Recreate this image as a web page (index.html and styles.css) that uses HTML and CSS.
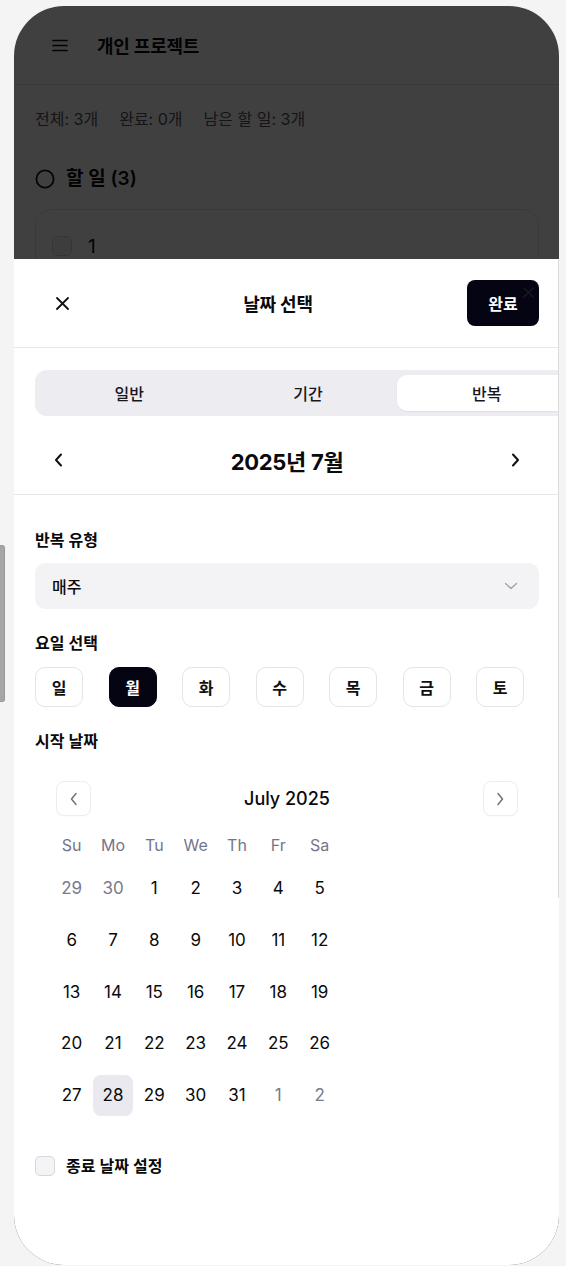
FILE: index.html
```html
<!DOCTYPE html>
<html lang="ko">
<head>
<meta charset="utf-8">
<title>날짜 선택</title>
<link rel="stylesheet" href="styles.css">
</head>
<body>
<div class="side-handle"></div>
<div class="device">
  <div class="app">
    <header class="app-header">
      <svg class="menu-icon" width="16" height="13" viewBox="0 0 16 13"><path d="M1 1.5h14M1 6.5h14M1 11.5h14" stroke="#111" stroke-width="1.7" stroke-linecap="round"/></svg>
      <h1 class="app-title">개인 프로젝트</h1>
    </header>
    <div class="stats"><span>전체: 3개</span><span>완료: 0개</span><span>남은 할 일: 3개</span></div>
    <h2 class="section-title"><svg width="20" height="20" viewBox="0 0 20 20"><circle cx="10" cy="10" r="8.6" fill="none" stroke="#111" stroke-width="1.8"/></svg>할 일 (3)</h2>
    <div class="todo-card"><span class="todo-check"></span><span class="todo-text">1</span></div>
  </div>
  <div class="overlay"></div>
  <div class="sheet">
    <div class="sheet-header">
      <button class="close-btn" aria-label="닫기"><svg width="13" height="13" viewBox="0 0 13 13"><path d="M1 1l11 11M12 1L1 12" stroke="#111" stroke-width="1.8" stroke-linecap="round"/></svg></button>
      <h2 class="sheet-title">날짜 선택</h2>
      <button class="done-btn">완료</button>
    </div>
    <div class="ghost-close"><svg width="11" height="11" viewBox="0 0 11 11"><path d="M1 1l9 9M10 1L1 10" stroke="#26262e" stroke-width="1.5" stroke-linecap="round"/></svg></div>
    <div class="sheet-scroll-line"></div>
    <div class="tabs">
      <button class="tab">일반</button>
      <button class="tab">기간</button>
      <button class="tab active">반복</button>
    </div>
    <div class="month-nav">
      <button class="chev-btn" aria-label="이전 달"><svg width="9" height="14" viewBox="0 0 9 14"><path d="M7 1.5L2 7l5 5.5" fill="none" stroke="#111" stroke-width="2" stroke-linecap="round" stroke-linejoin="round"/></svg></button>
      <div class="month-label">2025년 7월</div>
      <button class="chev-btn" aria-label="다음 달"><svg width="9" height="14" viewBox="0 0 9 14"><path d="M2 1.5L7 7l-5 5.5" fill="none" stroke="#111" stroke-width="2" stroke-linecap="round" stroke-linejoin="round"/></svg></button>
    </div>
    <div class="form">
      <div class="field">
        <div class="label">반복 유형</div>
        <div class="select"><span>매주</span><svg width="14" height="8" viewBox="0 0 14 8"><path d="M1.5 1.5L7 6.5l5.5-5" fill="none" stroke="#a1a1aa" stroke-width="1.4" stroke-linecap="round" stroke-linejoin="round"/></svg></div>
      </div>
      <div class="field">
        <div class="label">요일 선택</div>
        <div class="weekdays">
          <button class="wd">일</button>
          <button class="wd selected">월</button>
          <button class="wd">화</button>
          <button class="wd">수</button>
          <button class="wd">목</button>
          <button class="wd">금</button>
          <button class="wd">토</button>
        </div>
      </div>
      <div class="field">
        <div class="label">시작 날짜</div>
        <div class="calendar">
          <div class="cal-caption">
            <button class="cal-nav" aria-label="이전"><svg width="10" height="14" viewBox="0 0 10 14"><path d="M7 1.5L2.5 7 7 12.5" fill="none" stroke="#71717a" stroke-width="1.5" stroke-linecap="round" stroke-linejoin="round"/></svg></button>
            <div class="cal-title">July 2025</div>
            <button class="cal-nav" aria-label="다음"><svg width="10" height="14" viewBox="0 0 10 14"><path d="M3 1.5L7.5 7 3 12.5" fill="none" stroke="#71717a" stroke-width="1.5" stroke-linecap="round" stroke-linejoin="round"/></svg></button>
          </div>
          <div class="cal-head">
            <span>Su</span><span>Mo</span><span>Tu</span><span>We</span><span>Th</span><span>Fr</span><span>Sa</span>
          </div>
          <div class="cal-grid">
            <span class="day out">29</span><span class="day out">30</span><span class="day">1</span><span class="day">2</span><span class="day">3</span><span class="day">4</span><span class="day">5</span>
            <span class="day">6</span><span class="day">7</span><span class="day">8</span><span class="day">9</span><span class="day">10</span><span class="day">11</span><span class="day">12</span>
            <span class="day">13</span><span class="day">14</span><span class="day">15</span><span class="day">16</span><span class="day">17</span><span class="day">18</span><span class="day">19</span>
            <span class="day">20</span><span class="day">21</span><span class="day">22</span><span class="day">23</span><span class="day">24</span><span class="day">25</span><span class="day">26</span>
            <span class="day">27</span><span class="day today">28</span><span class="day">29</span><span class="day">30</span><span class="day">31</span><span class="day out">1</span><span class="day out">2</span>
          </div>
        </div>
      </div>
      <label class="end-date"><span class="checkbox"></span>종료 날짜 설정</label>
    </div>
  </div>
</div>
</body>
</html>
```
FILE: styles.css
```css
* { box-sizing: border-box; }

html, body {
  margin: 0;
  padding: 0;
}

body {
  background: #f4f4f4;
  font-family: "Inter", "Noto Sans CJK KR", sans-serif;
  color: #0a0a0a;
  width: 566px;
  height: 1266px;
  overflow: hidden;
  position: relative;
}

button {
  font-family: inherit;
  border: none;
  background: none;
  padding: 0;
  margin: 0;
  color: inherit;
  cursor: pointer;
}

h1, h2 { margin: 0; }

.side-handle {
  position: absolute;
  left: 0;
  top: 545px;
  width: 5px;
  height: 157px;
  background: #a6a6a6;
  border: 1px solid #999;
  border-left: none;
  border-radius: 0 3px 3px 0;
}

.device {
  position: relative;
  margin: 6px 0 0 14px;
  width: 545px;
  height: 1259px;
  border-radius: 50px;
  overflow: hidden;
  background: #ffffff;
}

/* underlying app */
.app {
  display: flex;
  flex-direction: column;
}

.app-header {
  height: 79px;
  border-bottom: 1px solid #e6e6e6;
  display: flex;
  align-items: center;
  padding-left: 38px;
  gap: 29px;
}

.menu-icon { display: block; }

.app-title {
  font-size: 18px;
  font-weight: 700;
  letter-spacing: -0.2px;
}

.stats {
  display: flex;
  gap: 21px;
  padding: 24px 0 0 21px;
  font-size: 16px;
  line-height: 20px;
  color: #55555e;
}

.section-title {
  display: flex;
  align-items: center;
  gap: 11px;
  margin: 37px 0 0 21px;
  font-size: 19px;
  line-height: 26px;
  font-weight: 600;
}

.section-title svg { display: block; }

.todo-card {
  margin: 17px 20px 0 21px;
  border: 1px solid #e4e4e7;
  border-radius: 16px;
  padding: 26px 16px;
  display: flex;
  gap: 16px;
  height: 110px;
  align-items: flex-start;
}

.todo-check {
  width: 20px;
  height: 20px;
  border: 1.5px solid #d4d4d8;
  border-radius: 5px;
  background: #f4f4f5;
}

.todo-text {
  font-size: 19px;
  line-height: 22px;
}

.overlay {
  position: absolute;
  inset: 0;
  background: rgba(0, 0, 0, 0.75);
}

/* sheet */
.sheet {
  position: absolute;
  left: 0;
  right: 0;
  top: 253px;
  bottom: 0;
  background: #ffffff;
  overflow: hidden;
}

.sheet-header {
  height: 89px;
  border-bottom: 1px solid #e8e8ea;
  display: flex;
  align-items: center;
  justify-content: space-between;
  padding: 0 20px 0 21px;
}

.close-btn {
  width: 54px;
  height: 40px;
  display: flex;
  align-items: center;
  justify-content: center;
}

.close-btn svg { display: block; }

.sheet-title {
  font-size: 18px;
  font-weight: 700;
  letter-spacing: -0.2px;
}

.done-btn {
  width: 72px;
  height: 46px;
  border-radius: 8px;
  background: #050412;
  color: #ffffff;
  font-size: 16px;
  font-weight: 700;
}

.ghost-close {
  position: absolute;
  top: 28px;
  right: 25px;
  opacity: 0.6;
  line-height: 0;
}

.sheet-scroll-line {
  position: absolute;
  right: 0;
  top: 1px;
  width: 1px;
  height: 638px;
  background: #dcdcdc;
}

.tabs {
  margin: 22px 0 0 21px;
  width: 546px;
  height: 46px;
  padding: 5px;
  border-radius: 12px;
  background: #ececf1;
  display: flex;
}

.tab {
  flex: 1;
  height: 36px;
  border-radius: 10px;
  font-size: 16px;
  font-weight: 500;
  color: #18181b;
}

.tab.active {
  background: #ffffff;
  box-shadow: 0 1px 2px rgba(0, 0, 0, 0.06);
}

.month-nav {
  margin-top: 10px;
  height: 69px;
  border-bottom: 1px solid #e8e8ea;
  display: flex;
  align-items: center;
  justify-content: space-between;
  padding: 0 23px 0 24px;
}

.chev-btn {
  width: 40px;
  height: 40px;
  display: flex;
  align-items: center;
  justify-content: center;
}

.chev-btn svg { display: block; }

.month-label {
  font-size: 22px;
  font-weight: 700;
  letter-spacing: -0.3px;
}

.form {
  padding: 34px 20px 0 21px;
  display: flex;
  flex-direction: column;
  gap: 23px;
}

.label {
  font-size: 16px;
  line-height: 22px;
  font-weight: 600;
  margin-bottom: 12px;
}

.select {
  height: 46px;
  border-radius: 10px;
  background: #f3f3f6;
  display: flex;
  align-items: center;
  justify-content: space-between;
  padding: 0 21px 0 17px;
  font-size: 16px;
  font-weight: 500;
}

.select svg { display: block; }

.weekdays {
  display: flex;
  gap: 25.5px;
  padding-top: 1px;
}

.wd {
  width: 48px;
  height: 40px;
  border-radius: 10px;
  border: 1.5px solid #e4e4e7;
  background: #ffffff;
  font-size: 16px;
  font-weight: 600;
  color: #111;
}

.wd.selected {
  background: #050412;
  border-color: #050412;
  color: #ffffff;
}

.calendar {
  padding: 17px 21px 16px 16px;
}

.cal-caption {
  margin-left: 5px;
  height: 35px;
  display: flex;
  align-items: center;
  justify-content: space-between;
}

.cal-nav {
  width: 35px;
  height: 35px;
  border-radius: 8px;
  border: 1px solid #ededf0;
  background: #ffffff;
  display: flex;
  align-items: center;
  justify-content: center;
  box-shadow: 0 1px 1px rgba(0, 0, 0, 0.02);
}

.cal-nav svg { display: block; }

.cal-title {
  font-size: 18px;
  font-weight: 500;
}

.cal-head {
  margin-top: 19px;
  display: grid;
  grid-template-columns: repeat(7, 41.33px);
  height: 20px;
  align-items: center;
}

.cal-head span {
  text-align: center;
  font-size: 16px;
  color: #75758a;
  line-height: 20px;
}

.cal-grid {
  margin-top: 12.5px;
  display: grid;
  grid-template-columns: repeat(7, 41.33px);
  grid-auto-rows: 41px;
  row-gap: 10.75px;
}

.day {
  display: flex;
  align-items: center;
  justify-content: center;
  font-size: 17px;
  color: #0a0a0a;
  margin: 0 0.6px;
  border-radius: 8px;
}

.day.out {
  color: #7a7a8c;
}

.day.today {
  background: #e9e9ef;
}

.end-date {
  display: flex;
  align-items: center;
  gap: 11px;
  font-size: 16px;
  font-weight: 600;
  line-height: 22px;
}

.checkbox {
  width: 20px;
  height: 20px;
  border-radius: 5px;
  border: 1px solid #d6d6db;
  background: #f4f4f6;
}
```
